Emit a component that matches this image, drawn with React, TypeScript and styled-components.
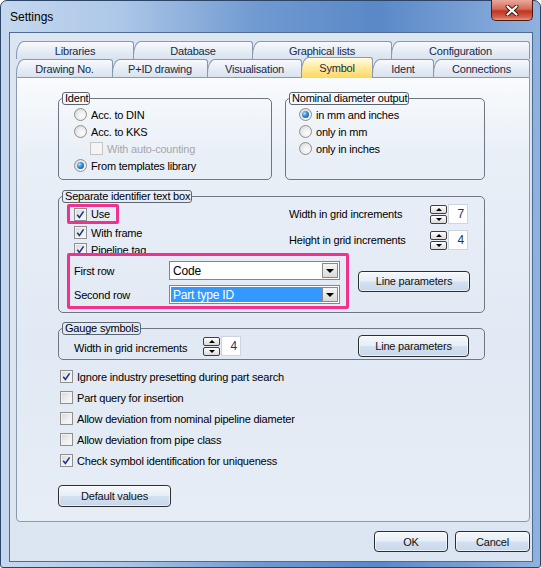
import React from 'react';
import styled, { createGlobalStyle } from 'styled-components';

const GlobalStyle = createGlobalStyle`
  html, body {
    margin: 0;
    padding: 0;
    background: #ffffff;
  }

  body {
    font-family: 'Liberation Sans', Arial, sans-serif;
    font-size: 11px;
    letter-spacing: -0.2px;
    color: #000;
  }

  * {
    box-sizing: border-box;
  }
`;

const Window = styled.div`
  width: 541px;
  height: 568px;
  border: 1px solid #2c4566;
  border-radius: 7px 7px 3px 3px;
  background: linear-gradient(90deg, #c4d8ef 0%, #adc7e8 22%, #6f99d0 48%, #5a88c8 70%, #8fb2de 100%);
  padding: 0 7px 5px 8px;
  display: flex;
  flex-direction: column;
`;

const TitleBar = styled.div`
  height: 31px;
  display: flex;
  justify-content: space-between;
  align-items: center;
  padding-left: 1px;
  font-size: 12px;
  letter-spacing: 0;
`;

const CloseButton = styled.div`
  align-self: flex-start;
  margin-top: -1px;
  width: 42px;
  height: 21px;
  border: 1px solid #4d1a12;
  border-top: none;
  border-radius: 0 0 5px 5px;
  background: linear-gradient(#e9a99c 0%, #d66b58 45%, #c0341f 55%, #d2604c 85%, #e39b8a 100%);
  display: flex;
  align-items: center;
  justify-content: center;
`;

const Client = styled.div`
  flex: 1;
  border: 1px solid #4f6b8f;
  background: #dce6f3;
  padding: 8px 2px 0 6px;
  display: flex;
  flex-direction: column;
`;

const TabRow = styled.div<{ $front?: boolean }>`
  display: flex;
  align-items: flex-end;
  height: 18px;
`;

const Tab = styled.div<{ $w: number; $active?: boolean }>`
  width: ${p => p.$w}px;
  height: ${p => (p.$active ? '21px' : '100%')};
  margin-bottom: ${p => (p.$active ? '-1px' : '0')};
  margin-left: -1px;
  position: relative;
  z-index: ${p => (p.$active ? 2 : 0)};
  border: 1px solid #8a99ae;
  border-bottom: none;
  border-radius: 8px 3px 0 0 / 14px 3px 0 0;
  background: ${p =>
    p.$active
      ? 'linear-gradient(#fffbe6 0%, #fff0b0 35%, #ffd75e 100%)'
      : 'linear-gradient(#f7f9fc 0%, #e6ecf4 55%, #d9e2ee 100%)'};
  color: #162a48;
  display: flex;
  align-items: center;
  justify-content: center;
  padding-bottom: ${p => (p.$active ? '1px' : '0')};

  &:first-child {
    margin-left: 0;
  }
`;

const Panel = styled.div`
  height: 445px;
  border: 1px solid #8a99ae;
  border-radius: 0 0 4px 4px;
  background: linear-gradient(#f9fbfd 0%, #e9eff7 18%, #e1e9f4 60%, #e6edf6 100%);
  padding: 14px 44px 0 41px;
  display: flex;
  flex-direction: column;
  align-items: flex-start;
`;

const TopRow = styled.div`
  display: grid;
  grid-template-columns: 214px 200px;
  column-gap: 13px;
  margin-bottom: 10px;
`;

const Group = styled.fieldset<{ $w?: number }>`
  margin: 0;
  padding: 0 3px;
  border: 1px solid #6f7782;
  border-radius: 5px;
  min-width: 0;
  width: ${p => (p.$w ? `${p.$w}px` : 'auto')};
`;

const Legend = styled.legend`
  padding: 0 1px 0 2px;
  border: 1px solid #5d6570;
  border-radius: 3px;
  height: 13px;
  line-height: 11px;
`;

const GroupBody = styled.div<{ $pad: string }>`
  padding: ${p => p.$pad};
  display: flex;
  flex-direction: column;
`;

const OptionRow = styled.label<{ $indent?: number; $h?: number; $disabled?: boolean }>`
  display: flex;
  align-items: center;
  gap: 4px;
  height: ${p => p.$h ?? 17}px;
  margin-left: ${p => p.$indent ?? 0}px;
  color: ${p => (p.$disabled ? '#a7a7a7' : '#000')};
  white-space: nowrap;
`;

const RadioCircle = styled.span<{ $on?: boolean }>`
  width: 13px;
  height: 13px;
  flex: none;
  border-radius: 50%;
  border: 1px solid #8e8f8f;
  background: radial-gradient(circle at 65% 65%, #fdfdfd 0%, #e9e9e9 55%, #cfcfcf 100%);
  display: flex;
  align-items: center;
  justify-content: center;

  &::after {
    content: '';
    display: ${p => (p.$on ? 'block' : 'none')};
    width: 7px;
    height: 7px;
    border-radius: 50%;
    background: radial-gradient(circle at 35% 35%, #b4e1ff 0%, #3d8fd9 40%, #0d3f80 100%);
  }
`;

const CheckBox = styled.span<{ $disabled?: boolean }>`
  width: 13px;
  height: 13px;
  flex: none;
  border: 1px solid ${p => (p.$disabled ? '#c5c5c5' : '#8e8f8f')};
  background: ${p =>
    p.$disabled ? '#f4f4f4' : 'linear-gradient(135deg, #d4d4d4 0%, #ededed 50%, #fbfbfb 100%)'};
  box-shadow: inset 0 0 0 1px ${p => (p.$disabled ? '#f4f4f4' : '#f3f3f3')};
  display: flex;
  align-items: center;
  justify-content: center;
`;

const Radio = ({ on, children }: { on?: boolean; children: React.ReactNode }) => (
  <OptionRow>
    <RadioCircle $on={on} />
    {children}
  </OptionRow>
);

const Check = ({
  on,
  disabled,
  indent,
  h,
  children,
}: {
  on?: boolean;
  disabled?: boolean;
  indent?: number;
  h?: number;
  children: React.ReactNode;
}) => (
  <OptionRow $indent={indent} $h={h} $disabled={disabled}>
    <CheckBox $disabled={disabled}>
      {on && (
        <svg width="11" height="11" viewBox="0 0 11 11">
          <path d="M2.2 5.8 L4.4 8.4 L8.6 2.4" fill="none" stroke="#22338a" strokeWidth="1.6" />
        </svg>
      )}
    </CheckBox>
    {children}
  </OptionRow>
);

const RowA = styled.div`
  display: flex;
  justify-content: space-between;
`;

const CheckCol = styled.div`
  display: flex;
  flex-direction: column;
  padding-left: 7px;
`;

const Highlight = styled.div`
  border: 3px solid #f0318d;
  border-radius: 2px;
`;

const UseBox = styled(Highlight)`
  margin-left: -7px;
  width: 52px;
  height: 20px;
  padding-left: 4px;
  display: flex;
  align-items: center;
`;

// the highlight frame below covers the lower half of this row in the original
const Clipped = styled.div`
  height: 12px;
  overflow: hidden;
`;

const SpinGrid = styled.div<{ $label: number }>`
  display: grid;
  grid-template-columns: ${p => p.$label}px auto;
  row-gap: 6px;
  align-items: center;
  align-self: flex-start;
`;

const SpinWrap = styled.div`
  display: flex;
  align-items: center;
  gap: 1px;
  height: 20px;
`;

const SpinButtons = styled.div`
  display: flex;
  flex-direction: column;
  gap: 1px;
`;

const SpinBtn = styled.div<{ $down?: boolean }>`
  width: 17px;
  height: 9px;
  border: 1px solid #3f3f3f;
  border-radius: 2px;
  background: linear-gradient(#ffffff, #dadada);
  display: flex;
  align-items: center;
  justify-content: center;

  &::after {
    content: '';
    border-left: 3px solid transparent;
    border-right: 3px solid transparent;
    ${p => (p.$down ? 'border-top: 3px solid #000;' : 'border-bottom: 3px solid #000;')}
  }
`;

const SpinValue = styled.div`
  width: 20px;
  height: 20px;
  background: #fff;
  border: 1px solid #cdd5e0;
  color: #18386e;
  font-size: 12px;
  text-align: right;
  padding-right: 3px;
  line-height: 18px;
`;

const Spin = ({ value }: { value: number }) => (
  <SpinWrap>
    <SpinButtons>
      <SpinBtn />
      <SpinBtn $down />
    </SpinButtons>
    <SpinValue>{value}</SpinValue>
  </SpinWrap>
);

const RowB = styled.div`
  display: flex;
  align-items: center;
  gap: 9px;
`;

const ComboBox = styled(Highlight)`
  width: 282px;
  padding: 5px 6px 2px 4px;
  display: grid;
  grid-template-columns: 95px 171px;
  row-gap: 5px;
  align-items: center;
`;

const ComboField = styled.div`
  height: 19px;
  border: 1px solid #7f8690;
  background: #fff;
  display: flex;
  align-items: stretch;
  padding: 1px;
`;

const ComboText = styled.div<{ $selected?: boolean }>`
  flex: 1;
  display: flex;
  align-items: center;
  padding-left: 2px;
  font-size: 12px;
  background: ${p => (p.$selected ? '#3399ff' : 'transparent')};
  color: ${p => (p.$selected ? '#fff' : '#000')};
`;

const ComboArrow = styled.div`
  width: 16px;
  border: 1px solid #8a8a8a;
  background: linear-gradient(#f6f6f6, #d9d9d9);
  display: flex;
  align-items: center;
  justify-content: center;

  &::after {
    content: '';
    border-left: 4px solid transparent;
    border-right: 4px solid transparent;
    border-top: 4px solid #000;
  }
`;

const Combo = ({ value, selected }: { value: string; selected?: boolean }) => (
  <ComboField>
    <ComboText $selected={selected}>{value}</ComboText>
    <ComboArrow />
  </ComboField>
);

const Button = styled.div<{ $w: number; $h?: number }>`
  width: ${p => p.$w}px;
  height: ${p => p.$h ?? 22}px;
  border: 1px solid #2e2e2e;
  border-radius: 4px;
  background: linear-gradient(#f4f8fc 0%, #e6eef7 48%, #d3e0f0 52%, #c7d7eb 100%);
  box-shadow: inset 0 0 0 1px rgba(255, 255, 255, 0.6);
  display: flex;
  align-items: center;
  justify-content: center;
  color: #111;
  flex: none;
`;

const GaugeRow = styled.div`
  display: flex;
  align-items: center;
  height: 22px;
`;

const GaugeLabel = styled.span`
  width: 129px;
  margin-top: 3px;
`;

const CheckList = styled.div`
  margin: 6px 0 0 2px;
  display: flex;
  flex-direction: column;
`;

const Footer = styled.div`
  display: flex;
  justify-content: flex-end;
  gap: 7px;
  padding-top: 9px;
`;

const rowOneTabs = [
  { label: 'Libraries', w: 118 },
  { label: 'Database', w: 120 },
  { label: 'Graphical lists', w: 140 },
  { label: 'Configuration', w: 139 },
];

const rowTwoTabs = [
  { label: 'Drawing No.', w: 97 },
  { label: 'P+ID drawing', w: 96 },
  { label: 'Visualisation', w: 95 },
  { label: 'Symbol', w: 72, active: true },
  { label: 'Ident', w: 62 },
  { label: 'Connections', w: 97 },
];

const options = [
  { label: 'Ignore industry presetting during part search', on: true },
  { label: 'Part query for insertion', on: false },
  { label: 'Allow deviation from nominal pipeline diameter', on: false },
  { label: 'Allow deviation from pipe class', on: false },
  { label: 'Check symbol identification for uniqueness', on: true },
];

const App = () => {
  return (
    <>
      <GlobalStyle />
      <Window>
        <TitleBar>
          <span>Settings</span>
          <CloseButton>
            <svg width="14" height="11" viewBox="0 0 14 11">
              <path d="M2.5 1.5 L11.5 9.5 M11.5 1.5 L2.5 9.5" stroke="#3a1510" strokeWidth="4" strokeLinecap="round" />
              <path d="M2.5 1.5 L11.5 9.5 M11.5 1.5 L2.5 9.5" stroke="#ffffff" strokeWidth="2.2" strokeLinecap="round" />
            </svg>
          </CloseButton>
        </TitleBar>
        <Client>
          <TabRow>
            {rowOneTabs.map(t => (
              <Tab key={t.label} $w={t.w}>
                {t.label}
              </Tab>
            ))}
          </TabRow>
          <TabRow $front>
            {rowTwoTabs.map(t => (
              <Tab key={t.label} $w={t.w} $active={t.active}>
                {t.label}
              </Tab>
            ))}
          </TabRow>
          <Panel>
            <TopRow>
              <Group>
                <Legend>Ident</Legend>
                <GroupBody $pad="1px 0 5px 12px">
                  <Radio>Acc. to DIN</Radio>
                  <Radio>Acc. to KKS</Radio>
                  <Check disabled indent={16}>With auto-counting</Check>
                  <Radio on>From templates library</Radio>
                </GroupBody>
              </Group>
              <Group>
                <Legend>Nominal diameter output</Legend>
                <GroupBody $pad="1px 0 5px 10px">
                  <Radio on>in mm and inches</Radio>
                  <Radio>only in mm</Radio>
                  <Radio>only in inches</Radio>
                </GroupBody>
              </Group>
            </TopRow>

            <Group $w={427}>
              <Legend>Separate identifier text box</Legend>
              <GroupBody $pad="1px 13px 3px 5px">
                <RowA>
                  <CheckCol>
                    <UseBox>
                      <Check on>Use</Check>
                    </UseBox>
                    <Check on>With frame</Check>
                    <Clipped>
                      <Check on>Pipeline tag</Check>
                    </Clipped>
                  </CheckCol>
                  <SpinGrid $label={141}>
                    <span>Width in grid increments</span>
                    <Spin value={7} />
                    <span>Height in grid increments</span>
                    <Spin value={4} />
                  </SpinGrid>
                </RowA>
                <RowB>
                  <ComboBox>
                    <span>First row</span>
                    <Combo value="Code" />
                    <span>Second row</span>
                    <Combo value="Part type ID" selected />
                  </ComboBox>
                  <Button $w={112} $h={21}>Line parameters</Button>
                </RowB>
              </GroupBody>
            </Group>

            <Group $w={427} style={{ marginTop: 9 }}>
              <Legend>Gauge symbols</Legend>
              <GroupBody $pad="0 12px 2px 12px">
                <GaugeRow>
                  <GaugeLabel>Width in grid increments</GaugeLabel>
                  <Spin value={4} />
                  <Button $w={111} style={{ marginLeft: 'auto' }}>Line parameters</Button>
                </GaugeRow>
              </GroupBody>
            </Group>

            <CheckList>
              {options.map(o => (
                <Check key={o.label} on={o.on} h={21}>
                  {o.label}
                </Check>
              ))}
            </CheckList>

            <Button $w={113} style={{ marginTop: 14 }}>Default values</Button>
          </Panel>
          <Footer>
            <Button $w={74} $h={21}>OK</Button>
            <Button $w={75} $h={21}>Cancel</Button>
          </Footer>
        </Client>
      </Window>
    </>
  );
};

export default App;
